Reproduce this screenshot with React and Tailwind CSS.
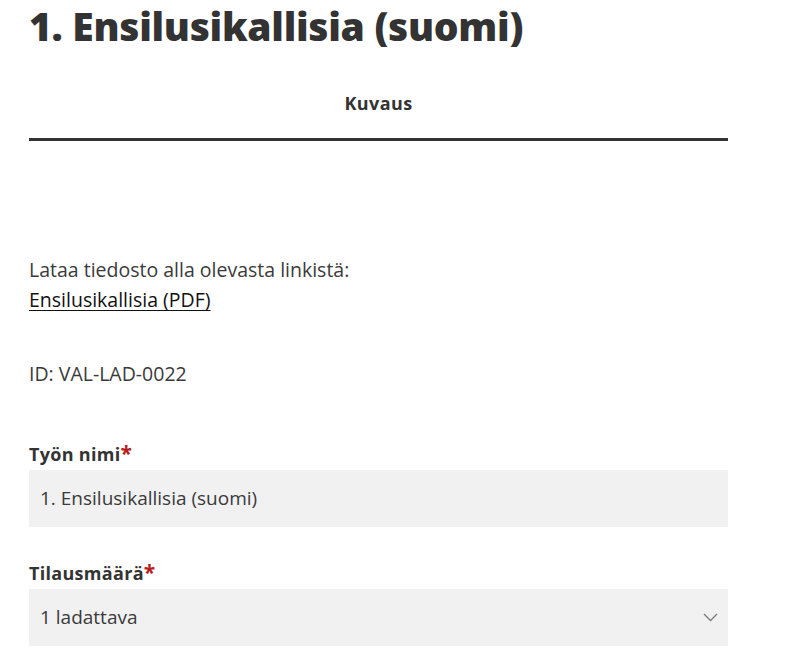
export default function App() {
  return (
    <div className="w-[805px] h-[664px] bg-white overflow-hidden text-[#3a3a3a]" style={{ fontFamily: '"Open Sans", Lato, sans-serif' }}>
      <div className="ml-[29px] w-[699px]">
        <h1 className="text-[39px] leading-[50px] font-extrabold text-[#333] tracking-[-0.3px] pt-[1px]">1. Ensilusikallisia (suomi)</h1>
        <div className="mt-[27px] border-b-[3px] border-[#333] h-[63px] flex justify-center items-end pb-[23px]">
          <span className="text-[18px] font-bold leading-[24px] text-[#333] tracking-[0.4px]">Kuvaus</span>
        </div>
        <div className="mt-[114px] text-[19.5px] leading-[30px]">
          <p>Lataa tiedosto alla olevasta linkistä:</p>
          <a href="#" className="underline text-[#111] underline-offset-[3px]">Ensilusikallisia (PDF)</a>
        </div>
        <p className="mt-[44px] text-[19.5px] leading-[30px]">ID: VAL-LAD-0022</p>
        <div className="mt-[54px]">
          <div className="text-[18px] font-bold leading-[22px] text-[#333] tracking-[0.3px]">Työn nimi<span className="text-[#b71c1c] text-[21px] leading-[0]">*</span></div>
          <div className="mt-[5px] h-[57px] bg-[#f1f1f1] flex items-center px-[11px] text-[19px]">1. Ensilusikallisia (suomi)</div>
        </div>
        <div className="mt-[35px]">
          <div className="text-[18px] font-bold leading-[22px] text-[#333] tracking-[0.3px]">Tilausmäärä<span className="text-[#b71c1c] text-[21px] leading-[0]">*</span></div>
          <div className="mt-[5px] h-[57px] bg-[#f1f1f1] flex items-center justify-between pl-[11px] pr-[10px] text-[19px]">
            <span>1 ladattava</span>
            <svg width="15" height="9" viewBox="0 0 15 9"><path d="M1 1 L7.5 7.5 L14 1" fill="none" stroke="#7a7a7a" strokeWidth="1.3" /></svg>
          </div>
        </div>
      </div>
    </div>
  );
}
